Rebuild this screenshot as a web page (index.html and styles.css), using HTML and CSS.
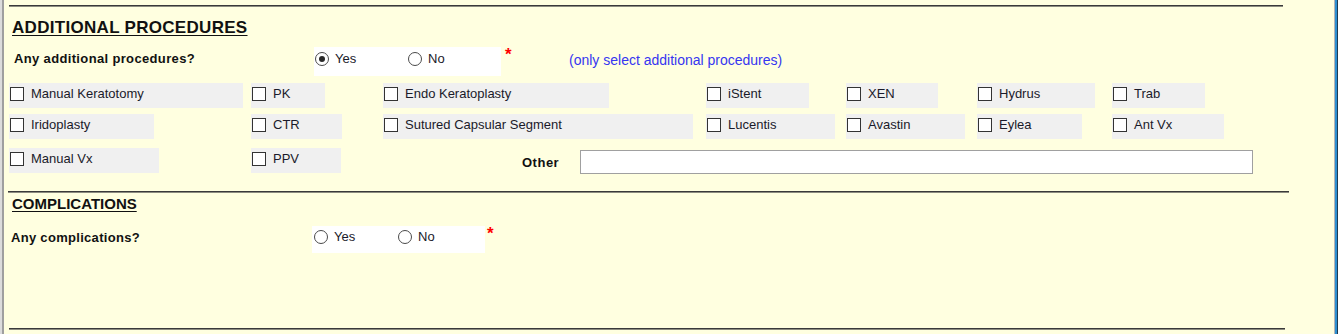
FILE: index.html
```html
<!DOCTYPE html>
<html lang="en">
<head>
    <meta charset="UTF-8">
    <title>Additional Procedures</title>
    <link rel="stylesheet" href="styles.css">
</head>
<body>

    <div class="window">
        <div class="panel">

            <div class="rule rule-top"></div>

            <!-- Additional procedures -->
            <h2 class="heading">ADDITIONAL PROCEDURES</h2>

            <div class="question">
                <span class="q-label">Any additional procedures?</span>
                <div class="radio-group">
                    <label class="radio checked"><span class="dot"></span>Yes</label>
                    <label class="radio"><span class="dot"></span>No</label>
                </div>
                <span class="req">*</span>
                <span class="hint">(only select additional procedures)</span>
            </div>

            <div class="proc-grid">
                <label class="chk" id="manualKeratotomy"><span class="box"></span>Manual Keratotomy</label>
                <label class="chk" id="pk"><span class="box"></span>PK</label>
                <label class="chk" id="endoKeratoplasty"><span class="box"></span>Endo Keratoplasty</label>
                <label class="chk" id="istent"><span class="box"></span>iStent</label>
                <label class="chk" id="xen"><span class="box"></span>XEN</label>
                <label class="chk" id="hydrus"><span class="box"></span>Hydrus</label>
                <label class="chk" id="trab"><span class="box"></span>Trab</label>

                <label class="chk" id="iridoplasty"><span class="box"></span>Iridoplasty</label>
                <label class="chk" id="ctr"><span class="box"></span>CTR</label>
                <label class="chk" id="suturedSegment"><span class="box"></span>Sutured Capsular Segment</label>
                <label class="chk" id="lucentis"><span class="box"></span>Lucentis</label>
                <label class="chk" id="avastin"><span class="box"></span>Avastin</label>
                <label class="chk" id="eylea"><span class="box"></span>Eylea</label>
                <label class="chk" id="antVx"><span class="box"></span>Ant Vx</label>

                <label class="chk" id="manualVx"><span class="box"></span>Manual Vx</label>
                <label class="chk" id="ppv"><span class="box"></span>PPV</label>
                <div class="other">
                    <span class="other-label">Other</span>
                    <input type="text" class="other-input">
                </div>
            </div>

            <div class="rule rule-mid"></div>

            <!-- Complications -->
            <h2 class="heading heading-sm">COMPLICATIONS</h2>

            <div class="question question-2">
                <span class="q-label">Any complications?</span>
                <div class="radio-group">
                    <label class="radio"><span class="dot"></span>Yes</label>
                    <label class="radio"><span class="dot"></span>No</label>
                </div>
                <span class="req">*</span>
            </div>

            <div class="rule rule-bottom"></div>

        </div>
    </div>

</body>
</html>
```

FILE: styles.css
```css
body {
    margin: 0;
    padding: 0;
    font-family: "Liberation Sans", Arial, sans-serif;
    color: #1a1a2a;
}

.window {
    width: 1338px;
    height: 334px;
    box-sizing: border-box;
    border-left: 2px solid #dcdcdc;
    border-right: 1px solid #1d3b53;
    overflow: hidden;
}

.panel {
    height: 100%;
    box-sizing: border-box;
    background-color: #ffffe0;
    border-left: 2px solid #9f9f9f;
    border-right: 2px solid #2d8ed1;
    box-shadow: inset -1px 0 0 #b4b4b4;
}

/* horizontal separators */
.rule {
    height: 2px;
    box-sizing: border-box;
    border-top: 1px solid #3a3a3a;
    border-bottom: 1px solid #8c8c80;
}

.rule-top {
    margin: 0 0 0 5px;
    position: relative;
    top: 5px;
    width: 1274px;
}

.rule-mid {
    margin: 17px 0 0 4px;
    width: 1281px;
}

.rule-bottom {
    margin: 75px 0 0 5px;
    width: 1276px;
}

.heading {
    margin: 11px 0 0 8px;
    font-size: 17px;
    line-height: 20px;
    font-weight: bold;
    letter-spacing: 0.3px;
    text-decoration: underline;
    text-underline-offset: 2px;
    color: #111;
}

.rule-top + .heading {
    margin-top: 16px;
}

.heading-sm {
    margin-top: 2px;
    font-size: 15px;
    line-height: 18px;
    letter-spacing: 0;
}

/* question rows */
.question {
    display: flex;
    align-items: flex-start;
    margin-top: 9px;
    height: 29px;
}

.q-label {
    margin-left: 10px;
    width: 300px;
    padding-top: 4px;
    font-size: 13px;
    line-height: 16px;
    font-weight: bold;
    letter-spacing: 0.35px;
    color: #111;
}

.radio-group {
    display: flex;
    width: 187px;
    height: 29px;
    box-sizing: border-box;
    padding: 5px 0 0 1px;
    background-color: #fff;
}

.radio {
    display: flex;
    align-items: center;
    gap: 6px;
    width: 93px;
    height: 14px;
    font-size: 13px;
    line-height: 14px;
}

.dot {
    width: 14px;
    height: 14px;
    box-sizing: border-box;
    border: 1px solid #4a4a4a;
    border-radius: 50%;
    background-color: #fff;
    display: flex;
    align-items: center;
    justify-content: center;
}

.radio.checked .dot::after {
    content: "";
    width: 6px;
    height: 6px;
    border-radius: 50%;
    background-color: #2a2a2a;
}

.req {
    margin-left: 4px;
    width: 64px;
    color: #ff0000;
    font-size: 17px;
    line-height: 16px;
    font-weight: bold;
}

.hint {
    padding-top: 5px;
    font-size: 14px;
    line-height: 16px;
    color: #3636f0;
}

.question-2 {
    margin-top: 13px;
    height: 27px;
}

.question-2 .q-label {
    margin-left: 7px;
    width: 301px;
    padding-top: 4px;
    letter-spacing: 0.3px;
}

.question-2 .radio-group {
    width: 173px;
    height: 27px;
    padding: 4px 0 0 2px;
}

.question-2 .radio {
    width: 84px;
}

.question-2 .req {
    margin-left: 2px;
}

/* checkbox grid */
.proc-grid {
    display: grid;
    grid-template-columns: 242px 132px 323px 140px 131px 135px 1fr;
    grid-template-rows: 31px 34px 26px;
    margin: 7px 0 0 5px;
}

.chk {
    display: flex;
    align-items: flex-start;
    gap: 7px;
    height: 25px;
    box-sizing: border-box;
    padding: 4px 0 0 1px;
    background-color: #f0f0f0;
    font-size: 13px;
    line-height: 14px;
    white-space: nowrap;
}

.box {
    flex: none;
    width: 14px;
    height: 14px;
    box-sizing: border-box;
    border: 1px solid #333;
    background-color: #fff;
}

#manualKeratotomy { width: 234px; }
#pk { width: 74px; }
#endoKeratoplasty { width: 226px; }
#istent { width: 103px; }
#xen { width: 92px; }
#hydrus { width: 118px; }
#trab { width: 93px; }

#iridoplasty { width: 145px; }
#ctr { width: 91px; }
#suturedSegment { width: 310px; }
#lucentis { width: 129px; }
#avastin { width: 119px; }
#eylea { width: 105px; }
#antVx { width: 112px; }

#manualVx { width: 150px; }
#ppv { width: 90px; }

.other {
    grid-column: 3 / span 5;
    display: flex;
    align-items: center;
    margin-left: 139px;
    height: 28px;
}

.other-label {
    width: 58px;
    font-size: 13px;
    font-weight: bold;
    letter-spacing: 0.5px;
    color: #111;
}

.other-input {
    width: 673px;
    height: 24px;
    box-sizing: border-box;
    margin: 0;
    padding: 2px 4px;
    border: 1px solid #a0a0a0;
    background-color: #fff;
    font-family: "Liberation Sans", Arial, sans-serif;
    font-size: 13px;
}
```
